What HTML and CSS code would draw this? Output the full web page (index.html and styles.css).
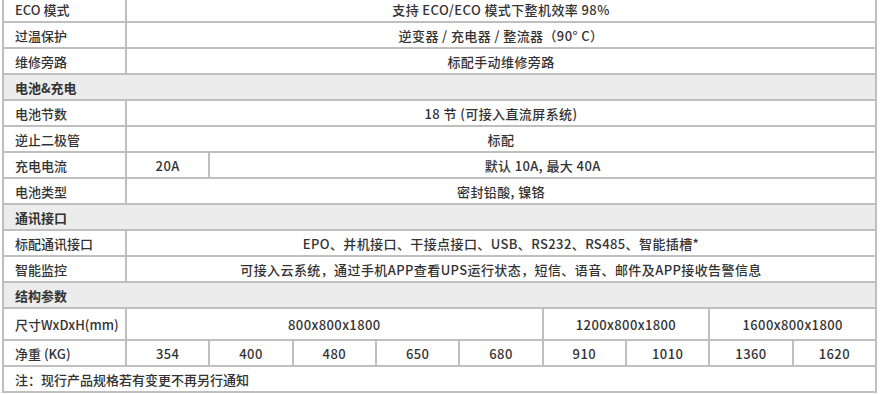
FILE: index.html
```html
<!DOCTYPE html>
<html lang="zh-CN">
<head>
<meta charset="utf-8">
<title>参数表</title>
<link rel="stylesheet" href="styles.css">
</head>
<body>
<div class="spec">
  <div class="cell label">ECO 模式</div>
  <div class="cell val span9">支持 ECO/ECO 模式下整机效率 98%</div>

  <div class="cell label">过温保护</div>
  <div class="cell val span9">逆变器 / 充电器 / 整流器（90° C）</div>

  <div class="cell label">维修旁路</div>
  <div class="cell val span9">标配手动维修旁路</div>

  <div class="cell section span10">电池&amp;充电</div>

  <div class="cell label">电池节数</div>
  <div class="cell val span9">18 节 (可接入直流屏系统)</div>

  <div class="cell label">逆止二极管</div>
  <div class="cell val span9">标配</div>

  <div class="cell label">充电电流</div>
  <div class="cell val">20A</div>
  <div class="cell val span8">默认 10A, 最大 40A</div>

  <div class="cell label">电池类型</div>
  <div class="cell val span9">密封铅酸, 镍铬</div>

  <div class="cell section span10">通讯接口</div>

  <div class="cell label">标配通讯接口</div>
  <div class="cell val span9">EPO、并机接口、干接点接口、USB、RS232、RS485、智能插槽*</div>

  <div class="cell label">智能监控</div>
  <div class="cell val span9">可接入云系统，通过手机APP查看UPS运行状态，短信、语音、邮件及APP接收告警信息</div>

  <div class="cell section span10">结构参数</div>

  <div class="cell label tall">尺寸WxDxH(mm)</div>
  <div class="cell val span5 tall">800x800x1800</div>
  <div class="cell val span2 tall">1200x800x1800</div>
  <div class="cell val span2 tall">1600x800x1800</div>

  <div class="cell label">净重 (KG)</div>
  <div class="cell val">354</div>
  <div class="cell val">400</div>
  <div class="cell val">480</div>
  <div class="cell val">650</div>
  <div class="cell val">680</div>
  <div class="cell val">910</div>
  <div class="cell val">1010</div>
  <div class="cell val">1360</div>
  <div class="cell val">1620</div>

  <div class="cell label span10">注：现行产品规格若有变更不再另行通知</div>
</div>
</body>
</html>
```
FILE: styles.css
```css
html, body {
  margin: 0;
  padding: 0;
  background: #ffffff;
}

body {
  font-family: "Noto Sans CJK SC", "Noto Sans", "Liberation Sans", sans-serif;
  font-size: 13px;
  font-weight: 500;
  color: #333333;
  overflow: hidden;
}

.spec {
  display: grid;
  grid-template-columns: 121px repeat(9, 1fr);
  grid-auto-rows: minmax(24px, auto);
  gap: 2px;
  padding: 2px;
  width: 875px;
  box-sizing: border-box;
  margin: -5px 0 0 2px;
  background: #bfbfbf;
}

.cell {
  background: #ffffff;
  display: flex;
  align-items: center;
  line-height: 16px;
  padding-top: 2px;
  box-sizing: border-box;
  white-space: nowrap;
}

.label {
  padding-left: 11px;
}

.val {
  justify-content: center;
  letter-spacing: 0.4px;
}

.section {
  background: #ececec;
  font-weight: bold;
  padding-left: 11px;
}

.tall {
  min-height: 30px;
}

.span2 { grid-column: span 2; }
.span5 { grid-column: span 5; }
.span8 { grid-column: span 8; }
.span9 { grid-column: span 9; }
.span10 { grid-column: span 10; }
```
